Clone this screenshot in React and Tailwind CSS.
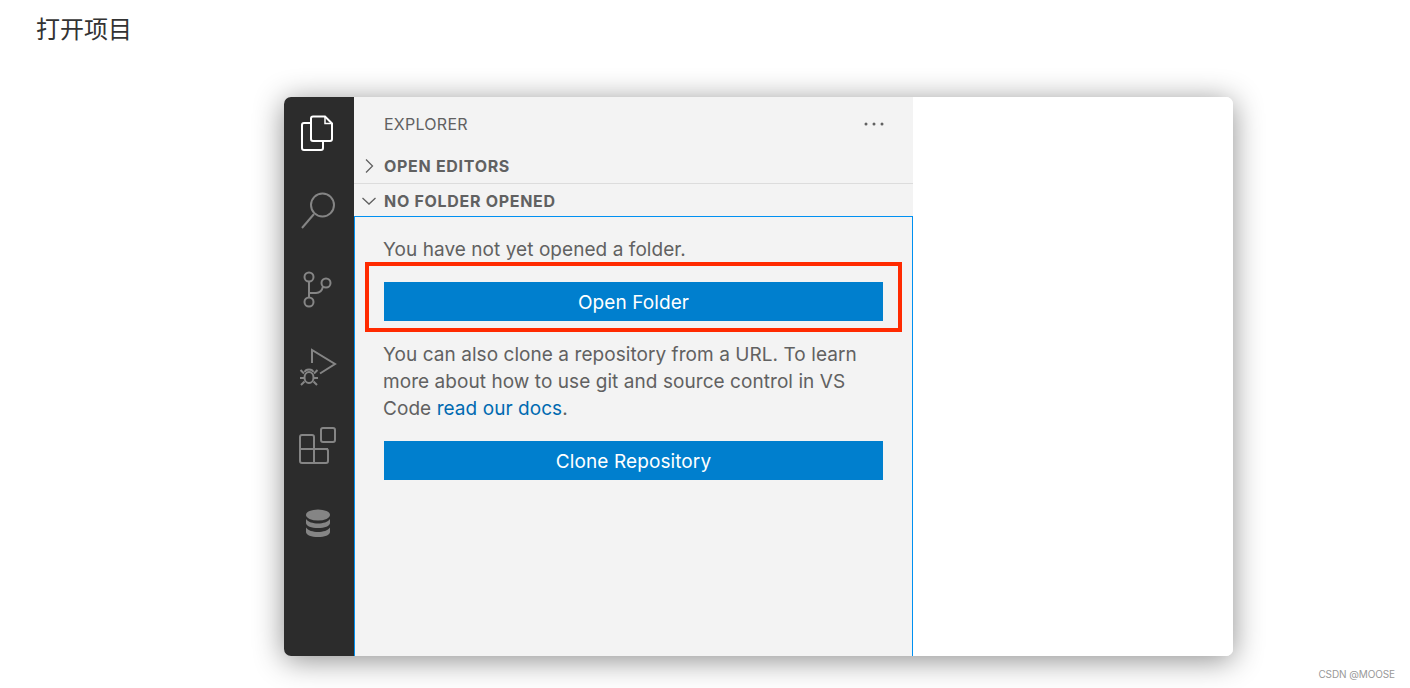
const Icon = ({ children, className = 'text-[#858585]' }) => (
  <svg
    width="48"
    height="48"
    viewBox="0 0 48 48"
    fill="none"
    stroke="currentColor"
    strokeWidth="2"
    className={className}
  >
    {children}
  </svg>
);

const ActivityBar = () => (
  <div className="w-[70px] flex-shrink-0 bg-[#2c2c2c] flex flex-col items-center gap-[30px] pt-3">
    <Icon className="text-white">
      <path d="M16 14h-7a2 2 0 0 0-2 2v23a2 2 0 0 0 2 2h17a2 2 0 0 0 2-2v-7" />
      <path d="M18 7.500h12l7 7v15.500a2 2 0 0 1-2 2H18a2 2 0 0 1-2-2V9.500a2 2 0 0 1 2-2z" />
      <path d="M30 7.500v7h7" strokeWidth="1.5" />
    </Icon>
    <Icon>
      <circle cx="27.500" cy="18" r="11.500" />
      <path d="M19 27L7 41" />
    </Icon>
    <Icon>
      <circle cx="14" cy="12" r="4.500" />
      <circle cx="31" cy="18" r="4.500" />
      <circle cx="14" cy="37" r="4.500" />
      <path d="M14 16.500v16" />
      <path d="M14 28h7c4 0 6-2 7-6.500" />
    </Icon>
    <Icon>
      <path d="M17 20V7l23 14-15 9.500" />
      <ellipse cx="14" cy="34.500" rx="4.500" ry="5.500" />
      <path d="M10 29c0-3.500 8-3.500 8 0M5.500 27l3.500 3.500M22.500 27l-3.500 3.500M5 35h4.500M23 35h-4.500M6 42l3.500-3.500M22 42l-3.500-3.500" />
    </Icon>
    <Icon>
      <path d="M7 14h10a2 2 0 0 1 2 2v26H7a2 2 0 0 1-2-2V16a2 2 0 0 1 2-2z" />
      <path d="M5 28h28M19 28h12a2 2 0 0 1 2 2v10a2 2 0 0 1-2 2H19" />
      <rect x="26" y="7" width="14" height="14" rx="2" />
    </Icon>
    <Icon>
      <ellipse cx="23" cy="16" rx="12" ry="5.500" fill="currentColor" stroke="none" />
      <path
        d="M11 20v4c0 3 5.500 5 12 5s12-2 12-5v-4c-2 3-7 4.500-12 4.500s-10-1.500-12-4.500z"
        fill="currentColor"
        stroke="none"
      />
      <path
        d="M11 28.500v4.500c0 3 5.500 5 12 5s12-2 12-5v-4.500c-2 3-7 4.500-12 4.500s-10-1.500-12-4.500z"
        fill="currentColor"
        stroke="none"
      />
    </Icon>
  </div>
);

const SectionHeader = ({ open, title, className }) => (
  <div className={`flex items-center text-[#616161] ${className}`}>
    <div className="w-[30px] flex justify-center flex-shrink-0">
      <svg width="16" height="16" viewBox="0 0 16 16" fill="none" stroke="currentColor" strokeWidth="1.300">
        {open ? <path d="M1.500 5l6.500 6 6.500-6" /> : <path d="M5 1.500l6.500 6.500-6.500 6.500" />}
      </svg>
    </div>
    <span className="text-[16px] font-bold tracking-[0.7px]">{title}</span>
  </div>
);

const PrimaryButton = ({ children }) => (
  <button className="w-full h-[39px] pt-[1px] bg-[#007fce] text-white text-[19px] tracking-[0.1px] flex items-center justify-center">
    {children}
  </button>
);

const App = () => (
  <div className="relative h-[688px] overflow-hidden bg-white font-['Inter','Noto_Sans_CJK_SC',sans-serif]">
    <h1 className="pl-9 pt-[12px] h-[97px] text-[24px] leading-9 font-normal text-[#333]">打开项目</h1>

    <div className="ml-[284px] w-[949px] h-[559px] flex bg-white rounded-[7px] overflow-hidden shadow-[0_4px_30px_rgba(0,0,0,0.45)]">
      <ActivityBar />

      <div className="w-[559px] flex-shrink-0 bg-[#f3f3f3] flex flex-col">
        <div className="h-[55px] flex items-center justify-between pl-[30px] pr-[29px] pb-[1px] text-[#616161]">
          <span className="text-[16px] tracking-[0.25px]">EXPLORER</span>
          <svg width="20" height="4" viewBox="0 0 20 4" fill="currentColor">
            <circle cx="2" cy="2" r="1.500" />
            <circle cx="10" cy="2" r="1.500" />
            <circle cx="18" cy="2" r="1.500" />
          </svg>
        </div>
        <SectionHeader title="OPEN EDITORS" className="h-[31px] pb-[3px]" />
        <div className="h-[1px] bg-[#dcdcdc]" />
        <SectionHeader open title="NO FOLDER OPENED" className="h-[32px] pt-[1px]" />

        <div className="flex-1 border border-b-0 border-[#0090f1] px-[29px] text-[19px] leading-[27px] tracking-[0.06px] text-[#616161]">
          <p className="pt-[19px] -ml-[1px]">You have not yet opened a folder.</p>
          <div className="-mx-[19px] mt-[-1px] border-4 border-[#ff2a00] px-[15px] pt-4 pb-[7px]">
            <PrimaryButton>Open Folder</PrimaryButton>
          </div>
          <p className="pt-[9px] -ml-[1px]">
            You can also clone a repository from a URL. To learn more about how to use git and source control in VS
            Code <span className="text-[#006ab1]">read our docs</span>.
          </p>
          <div className="mt-[19px]">
            <PrimaryButton>Clone Repository</PrimaryButton>
          </div>
        </div>
      </div>

      <div className="flex-1 bg-white" />
    </div>

    <span className="absolute right-[15px] top-[667px] text-[10px] leading-[14px] tracking-[-0.1px] text-[#999]">CSDN @MOOSE</span>
  </div>
);

export default App;
